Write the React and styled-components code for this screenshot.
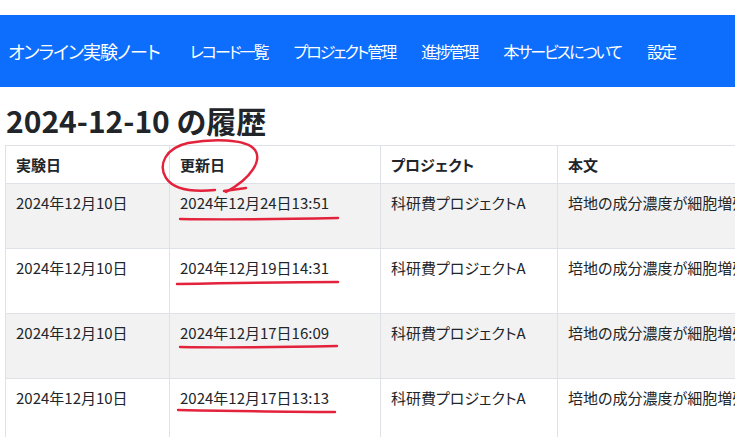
import React from 'react';
import styled, { createGlobalStyle } from 'styled-components';

const GlobalStyle = createGlobalStyle`
  html, body {
    margin: 0;
    padding: 0;
    background: #fff;
    overflow: hidden;
  }
  body {
    font-family: "Noto Sans CJK JP", "Noto Sans", sans-serif;
    color: #212529;
    font-feature-settings: "palt";
  }
`;

const Page = styled.div`
  position: relative;
  width: 735px;
  height: 437px;
  padding-top: 15px;
  box-sizing: border-box;
  overflow: hidden;
`;

const NavBar = styled.nav`
  height: 72px;
  background: #0d6efd;
  display: flex;
  align-items: center;
  padding-left: 8px;
`;

const Brand = styled.div`
  color: #fff;
  font-size: 18px;
  letter-spacing: -1px;
  margin-right: 30px;
  white-space: nowrap;
`;

const NavLinks = styled.div`
  display: flex;
  gap: 26px;
`;

const NavLink = styled.a`
  color: #fff;
  font-size: 16px;
  letter-spacing: -2px;
  text-decoration: none;
  white-space: nowrap;
`;

const Title = styled.h2`
  margin: 14px 0 6px 6px;
  font-size: 30px;
  font-weight: 700;
  line-height: 38px;
  white-space: nowrap;
`;

const TableWrap = styled.div`
  padding-left: 5px;
`;

const Table = styled.table`
  border-collapse: collapse;
  table-layout: fixed;
  width: 900px;
  font-size: 15px;
`;

const Th = styled.th`
  width: ${p => p.$w}px;
  height: 38px;
  text-align: left;
  font-weight: 700;
  padding: 0 10px;
  border: 1px solid #dee2e6;
  box-sizing: border-box;
`;

const Tr = styled.tr`
  background: ${p => (p.$striped ? '#f2f2f2' : '#fff')};
`;

const Td = styled.td`
  height: 65px;
  vertical-align: top;
  padding: 8px 10px 0;
  border: 1px solid #dee2e6;
  white-space: nowrap;
  overflow: hidden;
  box-sizing: border-box;
  line-height: 22px;
`;

const Marks = styled.svg`
  position: absolute;
  left: 0;
  top: 0;
  pointer-events: none;
`;

const rows = [
  '2024年12月24日13:51',
  '2024年12月19日14:31',
  '2024年12月17日16:09',
  '2024年12月17日13:13',
];

const body = '培地の成分濃度が細胞増殖に与える影響を検討した。';

export default function App() {
  return (
    <>
      <GlobalStyle />
      <Page>
        <NavBar>
          <Brand>オンライン実験ノート</Brand>
          <NavLinks>
            <NavLink>レコード一覧</NavLink>
            <NavLink>プロジェクト管理</NavLink>
            <NavLink>進捗管理</NavLink>
            <NavLink>本サービスについて</NavLink>
            <NavLink>設定</NavLink>
          </NavLinks>
        </NavBar>
        <Title>2024-12-10 の履歴</Title>
        <TableWrap>
          <Table>
            <thead>
              <tr>
                <Th $w={164}>実験日</Th>
                <Th $w={211}>更新日</Th>
                <Th $w={177}>プロジェクト</Th>
                <Th $w={348}>本文</Th>
              </tr>
            </thead>
            <tbody>
              {rows.map((r, i) => (
                <Tr key={i} $striped={i % 2 === 0}>
                  <Td>2024年12月10日</Td>
                  <Td>{r}</Td>
                  <Td>科研費プロジェクトA</Td>
                  <Td>{body}</Td>
                </Tr>
              ))}
            </tbody>
          </Table>
        </TableWrap>
        <Marks width="735" height="437" viewBox="0 0 735 437">
          <g fill="none" stroke="#e3223c" strokeWidth="2.4" strokeLinecap="round">
            <path d="M226 192 C252 178 262 160 255 150 C246 138 210 139 188 143 C165 148 158 165 166 178 C174 190 195 192 215 190" />
            <path d="M224 191 L246 188" />
            <path d="M180 219 C230 220 290 219 338 218" />
            <path d="M177 284 C230 283 290 282 338 282" />
            <path d="M180 347 C230 348 290 347 337 346" />
            <path d="M178 410 C230 411 290 412 335 412" />
          </g>
        </Marks>
      </Page>
    </>
  );
}
